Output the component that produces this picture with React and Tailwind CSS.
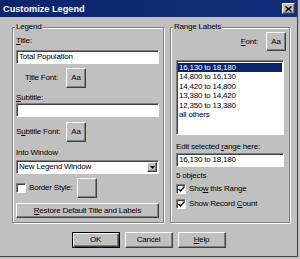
const raised =
  "border border-t-white border-l-white border-b-[#404040] border-r-[#404040] shadow-[inset_-1px_-1px_0_#808080] bg-[#c0c0c0]";
const sunken =
  "border border-t-[#808080] border-l-[#808080] border-b-white border-r-white shadow-[inset_1px_1px_0_#404040] bg-white";

const ranges = [
  "16,130 to 18,180",
  "14,800 to 16,130",
  "14,420 to 14,800",
  "13,380 to 14,420",
  "12,350 to 13,380",
  "all others",
];

export default function App() {
  return (
    <div className="w-[300px] h-[259px] bg-[#c0c0c0] text-black text-[8px] leading-[10px] tracking-[-0.2px] font-[family-name:'Liberation_Sans',Arial,sans-serif]">
      <div className="w-[298px] h-[257px] flex flex-col border-r border-b border-[#404040]">
        <TitleBar />

        <div className="flex mt-[10px] ml-[12px] gap-[6px]">
          <GroupBox label="Legend" className="w-[152px] h-[196px] pl-[3px] pr-[4px] pt-[8px]">
            <div>
              <U>T</U>itle:
            </div>
            <div className={`${sunken} h-[14px] mt-[4px] flex items-center pl-[2px]`}>
              Total Population
            </div>
            <div className="flex items-center mt-[4px]">
              <span className="ml-[9px] w-[41px]">
                T<U>i</U>tle Font:
              </span>
              <FontButton />
            </div>
            <div className="mt-[5px]">
              <U>S</U>ubtitle:
            </div>
            <div className={`${sunken} h-[14px]`} />
            <div className="flex items-center mt-[5px]">
              <span className="w-[50px]">
                S<U>u</U>btitle Font:
              </span>
              <FontButton />
            </div>
            <div className="mt-[6px]">Into Window</div>
            <div className={`${sunken} h-[14px] mt-[2px] flex items-center pl-[2px] pr-[1px]`}>
              <span className="flex-1">New Legend Window</span>
              <span className={`${raised} w-[10px] h-[10px] flex items-center justify-center`}>
                <svg width="5" height="3" viewBox="0 0 5 3">
                  <path d="M0 0h5L2.5 3z" fill="#000" />
                </svg>
              </span>
            </div>
            <div className="flex items-center mt-[4px]">
              <CheckBox />
              <span className="ml-[3px] w-[48px]">Border Style:</span>
              <span className={`${raised} w-[20px] h-[20px]`} />
            </div>
            <button className={`${raised} w-full h-[15px] mt-[5px] flex items-center justify-center`}>
              <span>
                <U>R</U>estore Default Title and Labels
              </span>
            </button>
          </GroupBox>

          <GroupBox label="Range Labels" className="w-[120px] h-[196px] px-[5px] pt-[4px]">
            <div className="flex items-center justify-end mr-[-2px] gap-[8px]">
              <span>
                <U>F</U>ont:
              </span>
              <span className={`${raised} w-[20px] h-[19px] flex items-center justify-center`}>
                Aa
              </span>
            </div>
            <div className={`${sunken} h-[75px] mt-[9px] pt-[2px] px-[1px]`}>
              {ranges.map((r, i) => (
                <div
                  key={r}
                  className={`h-[9.4px] leading-[9.4px] pl-[1px] ${i === 0 ? "bg-[#0a246a] text-white" : ""}`}
                >
                  {r}
                </div>
              ))}
            </div>
            <div className="mt-[7px]">
              Edit selected <U>r</U>ange here:
            </div>
            <div className={`${sunken} h-[14px] mt-[1px] flex items-center pl-[2px]`}>
              16,130 to 18,180
            </div>
            <div className="mt-[4px]">5 objects</div>
            <div className="flex items-center mt-[3px]">
              <CheckBox checked />
              <span className="ml-[3px]">
                Sho<U>w</U> this Range
              </span>
            </div>
            <div className="flex items-center mt-[5px]">
              <CheckBox checked />
              <span className="ml-[3px]">
                Show Record <U>C</U>ount
              </span>
            </div>
          </GroupBox>
        </div>

        <div className="flex justify-center gap-[5px] mt-[9px]">
          <div className="border border-black">
            <button className={`${raised} w-[46px] h-[14px] flex items-center justify-center`}>
              OK
            </button>
          </div>
          <button className={`${raised} w-[48px] h-[16px] flex items-center justify-center`}>
            Cancel
          </button>
          <button className={`${raised} w-[48px] h-[16px] flex items-center justify-center`}>
            <span>
              <U>H</U>elp
            </span>
          </button>
        </div>
      </div>
    </div>
  );
}

function TitleBar() {
  return (
    <div className="h-[17px] flex items-center justify-between pl-[3px] pr-[2px] bg-[linear-gradient(90deg,#0a246a,#12307a)]">
      <span className="text-white font-bold text-[9.2px] tracking-normal">Customize Legend</span>
      <span className={`${raised} w-[13px] h-[11px] flex items-center justify-center`}>
        <svg width="7" height="6" viewBox="0 0 7 6">
          <path d="M0.5 0.5l6 5M6.5 0.5l-6 5" stroke="#000" strokeWidth="1.4" />
        </svg>
      </span>
    </div>
  );
}

function GroupBox({ label, className, children }) {
  return (
    <div className={`relative border border-[#808080] shadow-[1px_1px_0_#fff,inset_1px_1px_0_#fff] ${className}`}>
      <span className="absolute left-[2px] top-[-6px] bg-[#c0c0c0] px-[1px] leading-[10px]">
        {label}
      </span>
      {children}
    </div>
  );
}

function FontButton() {
  return (
    <span className={`${raised} w-[20px] h-[20px] flex items-center justify-center`}>Aa</span>
  );
}

function CheckBox({ checked }) {
  return (
    <span className={`${sunken} w-[10px] h-[10px] flex items-center justify-center shrink-0`}>
      {checked && (
        <svg width="7" height="7" viewBox="0 0 7 7">
          <path d="M0.5 3l2 2 4-4.5" fill="none" stroke="#000" strokeWidth="1.5" />
        </svg>
      )}
    </span>
  );
}

function U({ children }) {
  return <span className="underline decoration-1 underline-offset-1">{children}</span>;
}
